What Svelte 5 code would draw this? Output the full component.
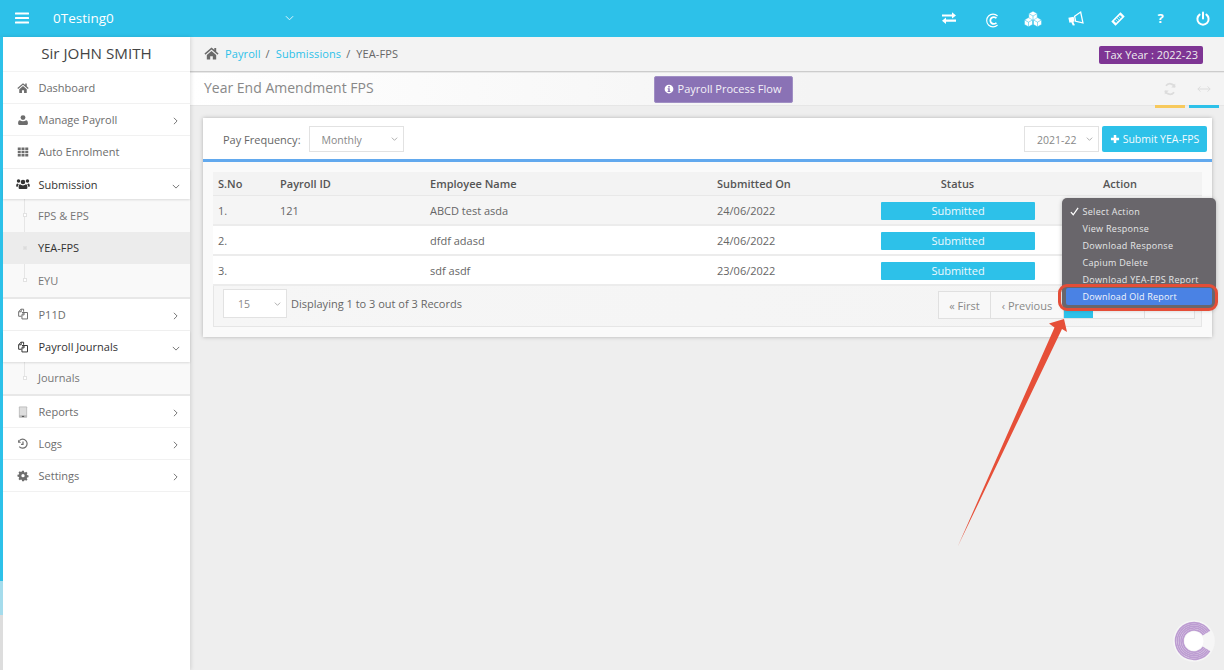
<script>
  const icons = {
    home: 'M8 1.5 0.5 8l1 1.2L8 3.6l6.5 5.6 1-1.2L13 5.8V2h-2v2.1zM3 9.6V14.5h3.6v-3.6h2.8v3.6H13V9.6L8 5.3z',
    user: 'M8 1.5a3.3 3.3 0 1 1 0 6.6 3.3 3.3 0 0 1 0-6.6zM3.8 8.2C5 9.2 6.4 9.6 8 9.6s3-.4 4.2-1.4c1.5.3 2.3 1.6 2.3 3.6v1.2c0 .8-.6 1.5-1.4 1.5H2.9c-.8 0-1.4-.7-1.4-1.5v-1.2c0-2 .8-3.3 2.3-3.6z',
    grid: 'M1 2h4v3.4H1zM6 2h4v3.4H6zM11 2h4v3.4h-4zM1 6.3h4v3.4H1zM6 6.3h4v3.4H6zM11 6.3h4v3.4h-4zM1 10.600h4V14H1zM6 10.600h4V14H6zM11 10.600h4V14h-4z',
    users: 'M8 3a2.6 2.6 0 1 1 0 5.2A2.6 2.6 0 0 1 8 3zM2.9 2.6a2 2 0 1 1 0 4 2 2 0 0 1 0-4zM13.100 2.6a2 2 0 1 1 0 4 2 2 0 0 1 0-4zM4.6 8.4c.9.8 2 1.2 3.4 1.2s2.5-.4 3.4-1.2c1 .2 1.6 1.2 1.6 2.6v1.6c0 .6-.5 1-1 1H4c-.5 0-1-.4-1-1V11c0-1.4.6-2.4 1.6-2.6zM.2 10.200c0-1.4.5-2.6 1.5-2.8.5.5 1 .7 1.6.8-.8.6-1.2 1.6-1.3 2.8H.7c-.3 0-.5-.3-.5-.8zM15.800 10.200c0 .5-.2.8-.5.8h-1.3c-.1-1.2-.5-2.2-1.3-2.8.6-.1 1.1-.3 1.6-.8 1 .2 1.5 1.4 1.5 2.8z',
    cog: 'M6.8 1h2.4l.4 1.9c.4.1.8.3 1.1.5l1.6-1 1.7 1.7-1 1.6c.2.3.4.7.5 1.1l1.9.4v2.4l-1.9.4c-.1.4-.3.8-.5 1.1l1 1.6-1.7 1.7-1.6-1c-.3.2-.7.4-1.1.5L9.2 15H6.8l-.4-1.9c-.4-.1-.8-.3-1.1-.5l-1.6 1L2 11.900l1-1.6c-.2-.3-.4-.7-.5-1.1L.6 8.8V6.4l1.9-.4c.1-.4.3-.8.5-1.1L2 3.3 3.7 1.6l1.6 1c.3-.2.7-.4 1.1-.5zM8 5.4a2.2 2.2 0 1 0 0 4.4 2.2 2.2 0 0 0 0-4.4z',
    info: 'M8 1a7 7 0 1 1 0 14A7 7 0 0 1 8 1zM6.8 3.2v2.2h2.4V3.2zM5.8 6.6v1.6h1v3H5.8v1.6h4.4v-1.6h-1V6.6z',
    plus: 'M6 1.5h4V6h4.5v4H10v4.5H6V10H1.5V6H6z'
  };
  const menu = [
    { label: 'Dashboard', icon: 'home' },
    { label: 'Manage Payroll', icon: 'user', chev: 'right' },
    { label: 'Auto Enrolment', icon: 'grid' },
    { label: 'Submission', icon: 'users', chev: 'down', open: true, subs: [
      { label: 'FPS & EPS' }, { label: 'YEA-FPS', active: true }, { label: 'EYU' } ] },
    { label: 'P11D', icon: 'docs', chev: 'right' },
    { label: 'Payroll Journals', icon: 'docs', chev: 'down', open: true, subs: [ { label: 'Journals' } ] },
    { label: 'Reports', icon: 'tablet', chev: 'right' },
    { label: 'Logs', icon: 'history', chev: 'right' },
    { label: 'Settings', icon: 'cog', chev: 'right' }
  ];
  const rows = [
    { n: '1.', id: '121', name: 'ABCD test asda', date: '24/06/2022' },
    { n: '2.', id: '', name: 'dfdf adasd', date: '24/06/2022' },
    { n: '3.', id: '', name: 'sdf asdf', date: '23/06/2022' }
  ];
  const actions = ['Select Action', 'View Response', 'Download Response', 'Capium Delete', 'Download YEA-FPS Report'];
  const rings = [18.4, 16.6, 14.8, 13, 11.2];
  function hex(x, y, r) {
    const w = r * 0.87, h = r / 2;
    return `M${x} ${y - r}L${x + w} ${y - h}V${y + h}L${x} ${y + r}L${x - w} ${y + h}V${y - h}z`;
  }
  function ys(x, y, r) {
    const w = r * 0.87, h = r / 2;
    return `M${x - w} ${y - h}L${x} ${y}L${x + w} ${y - h}M${x} ${y}V${y + r}`;
  }
  const cubes = [[9, 5, 4.8], [4.5, 11.2, 4.6], [13.5, 11.2, 4.6]];
</script>

{#snippet icon(name)}
  {#if name === 'docs'}
    <svg class="mi" viewBox="0 0 16 16" fill="none" stroke="currentColor" stroke-width="1.3"><path d="M6 11H2.2V5l3-3.4h3.6V5"/><path d="M5.6 1.8V5H2.4"/><path d="M6.6 6h7.4v8.6H6.6V9l2.600-3"/><path d="M9.4 6.2v3H6.8"/></svg>
  {:else if name === 'history'}
    <svg class="mi" viewBox="0 0 16 16" fill="none" stroke="currentColor" stroke-width="1.6"><path d="M3.200 3.400A6 6 0 1 1 3 11.600"/><path d="M8 4.800V8.400H5.400"/><path d="M1.400 2.200v4h4z" fill="currentColor" stroke="none"/></svg>
  {:else if name === 'tablet'}
    <svg class="mi" viewBox="0 0 16 16"><rect x="2.500" y="0.500" width="11" height="15" rx="1" fill="#b9b9b9"/><rect x="3.500" y="1.800" width="9" height="10.500" fill="#dedede"/><rect x="6.500" y="13.200" width="3" height="1.400" fill="#555"/></svg>
  {:else}
    <svg class={`mi ${name}`} viewBox="0 0 16 16" fill="currentColor"><path d={icons[name]}/></svg>
  {/if}
{/snippet}

{#snippet caret(cls)}
  <svg class={cls} viewBox="0 0 10 6" fill="none" stroke="currentColor" stroke-width="1"><path d="M1 1l4 4 4-4"/></svg>
{/snippet}

<div class="page">
  <header class="topbar">
    <div class="brand">
      <svg class="burger" viewBox="0 0 14 12" fill="#fff"><rect width="14" height="2.200" y="0.400" rx=".5"/><rect width="14" height="2.200" y="4.900" rx=".5"/><rect width="14" height="2.200" y="9.400" rx=".5"/></svg>
      <span class="company">0Testing0</span>
      <svg class="brandcaret" viewBox="0 0 10 6" fill="none" stroke="#fff" stroke-width="1.100" opacity=".85"><path d="M1 1l4 4 4-4"/></svg>
    </div>
    <nav class="tools">
      <svg viewBox="0 0 16 16" fill="#fff"><path d="M1 3.400h10V1.200L15 4.400l-4 3.100V5.400H1zM15 8.600H5V6.600l-4 3.100 4 3.200v-2.200h10z"/></svg>
      <svg class="cc" viewBox="0 0 16 16" fill="none" stroke="#fff"><path d="M13.400 3.200A6.800 6.800 0 1 0 13.400 12.800" stroke-width="1.200"/><path d="M12.200 5.600a3.700 3.700 0 1 0 0 4.800" stroke-width="1.900"/></svg>
      <svg class="cubes" viewBox="0 0 18 16">
        {#each cubes as c}
          <path d={hex(c[0], c[1], c[2])} fill="#fff" stroke="#2dc1e9" stroke-width=".4"/>
          <path d={ys(c[0], c[1], c[2])} fill="none" stroke="#2dc1e9" stroke-width=".55"/>
        {/each}
      </svg>
      <svg viewBox="0 0 16 16" fill="#fff"><g transform="rotate(-12 8 8)"><path d="M.8 5.200h5.400v5H4.800l.9 3.600H3.500L2.700 10.200H.8z"/><path d="M7.200 5 14 2.200v11L7.200 10.200z" fill="none" stroke="#fff" stroke-width="1.300"/></g></svg>
      <svg class="tk" viewBox="0 0 16 16"><g transform="rotate(-45 8 8)"><rect x="0.500" y="4.500" width="15" height="7" rx=".5" fill="#fff"/><rect x="3.200" y="6.300" width="9.600" height="3.400" fill="#2dc1e9"/><path d="M5.500 6.300v3.400M8 6.300v3.400M10.500 6.300v3.400" stroke="#fff" stroke-width=".7"/></g></svg>
      <span class="q">?</span>
      <svg viewBox="0 0 16 16" fill="none" stroke="#fff" stroke-width="2" stroke-linecap="round"><path d="M8 1.500v6"/><path d="M4.600 3.600a5.600 5.600 0 1 0 6.800 0"/></svg>
    </nav>
  </header>

  <div class="body">
    <aside class="sidebar">
      <h2 class="who">Sir JOHN SMITH</h2>
      <ul class="menu">
        {#each menu as m}
          <li class="item" class:open={m.open}>
            <span class="mw">{@render icon(m.icon)}</span>
            <span class="ml">{m.label}</span>
            {#if m.chev === 'right'}
              <svg class="chev" viewBox="0 0 6 10" fill="none" stroke="currentColor" stroke-width="1.100"><path d="M1 1l4 4-4 4"/></svg>
            {:else if m.chev === 'down'}
              <svg class="chev down" viewBox="0 0 10 6" fill="none" stroke="currentColor" stroke-width="1.100"><path d="M1 1l4 4 4-4"/></svg>
            {/if}
          </li>
          {#if m.subs}
            <li class="subs">
              {#each m.subs as s}
                <div class="sub" class:active={s.active}><i class="dot"></i>{s.label}</div>
              {/each}
            </li>
          {/if}
        {/each}
      </ul>
    </aside>

    <main class="main">
      <div class="crumbs">
        <div class="trail">
          <svg class="hm" viewBox="0 0 16 16" fill="#6b6b6b"><path d={icons.home}/></svg>
          <a href="#p">Payroll</a><span class="sep">/</span><a href="#s">Submissions</a><span class="sep">/</span><span>YEA-FPS</span>
        </div>
        <span class="tax">Tax Year : 2022-23</span>
      </div>

      <div class="titlebar">
        <h1>Year End Amendment FPS</h1>
        <button class="flow"><svg viewBox="0 0 16 16" fill="#fff"><path d={icons.info}/></svg>Payroll Process Flow</button>
        <div class="tb-tools">
          <div class="tb yellow">
            <svg viewBox="0 0 16 16" fill="none" stroke="#dcdcdc" stroke-width="2"><path d="M13.400 6A5.600 5.600 0 0 0 3.400 4.400M2.600 10a5.600 5.600 0 0 0 10 1.600"/><path d="M14 1.600v4.600H9.400zM2 14.400V9.800h4.600z" fill="#dcdcdc" stroke="none"/></svg>
          </div>
          <div class="tb blue">
            <svg viewBox="0 0 16 10" fill="none" stroke="#dcdcdc" stroke-width="1.100"><path d="M1 5h14M4 2 1 5l3 3M12 2l3 3-3 3"/></svg>
          </div>
        </div>
      </div>

      <section class="card">
        <div class="filter">
          <label class="pf" for="pf">Pay Frequency:</label>
          <div class="sel pfsel" id="pf">Monthly{@render caret('selc')}</div>
          <div class="right">
            <div class="sel yrsel">2021-22{@render caret('selc')}</div>
            <button class="submit"><svg viewBox="0 0 16 16" fill="#fff"><path d={icons.plus}/></svg>Submit YEA-FPS</button>
          </div>
        </div>
        <div class="tablewrap">
          <div class="row head">
            <div>S.No</div><div>Payroll ID</div><div>Employee Name</div><div>Submitted On</div><div class="c">Status</div><div class="c">Action</div>
          </div>
          {#each rows as r, i}
            <div class="row data" class:odd={i === 0}>
              <div>{r.n}</div><div>{r.id}</div><div>{r.name}</div><div>{r.date}</div>
              <div><span class="badge">Submitted</span></div><div></div>
            </div>
          {/each}
          <div class="foot">
            <div class="sel psel">15{@render caret('selc')}</div>
            <span class="disp">Displaying 1 to 3 out of 3 Records</span>
            <div class="pager">
              <span class="pg first">« First</span>
              <span class="pg prev">‹ Previous</span>
              <span class="pg cur"></span>
              <span class="pg nx"></span>
              <span class="pg nx2"></span>
            </div>
          </div>
        </div>
      </section>
    </main>
  </div>

  <div class="dropdown">
    {#each actions as a, i}
      <div class="act">{#if i === 0}<svg class="tick" viewBox="0 0 10 10" fill="none" stroke="#fff" stroke-width="1.400"><path d="M1 5.600 3.600 8.600 9 1"/></svg>{/if}{a}</div>
    {/each}
    <div class="act hl">Download Old Report</div>
  </div>
  <div class="ring"></div>

  <svg class="arrow" viewBox="0 0 1224 670" fill="#e64f38"><path d="M1064 319 1049 323.500 1054.500 327.500 957.500 547 1062 329 1067 332z"/></svg>

  <div class="logo">
    <svg viewBox="0 0 42 42" fill="none">
      <circle cx="21" cy="21" r="20.800" fill="#f6f6f6"/>
      {#each rings as r}
        <circle cx="21" cy="21" {r} stroke="#bd9dd2" stroke-width="1.700" pathLength="360" stroke-dasharray="296 64" transform="rotate(32 21 21)"/>
      {/each}
      <circle cx="21" cy="21" r="9.500" fill="#fff"/>
    </svg>
  </div>
</div>

<style>
  :global(body) { margin: 0; background: #eeeeee; }
  .page {
    position: relative; width: 1224px; height: 670px; overflow: hidden;
    font-family: "Open Sans", "Noto Sans", sans-serif; font-size: 11px; color: #555;
    background: #eeeeee; display: flex; flex-direction: column;
  }
  .topbar {
    height: 37px; background: #2dc1e9; display: flex; align-items: center; justify-content: space-between;
    flex: none; color: #fff;
  }
  .brand { display: flex; align-items: center; padding-left: 15px; }
  .burger { width: 14px; height: 12px; margin-top: -1px; }
  .company { margin-left: 24px; font-size: 13.500px; width: 230px; line-height: 1; }
  .brandcaret { width: 9px; height: 6px; margin-top: -1px; margin-left: 2px; }
  .tools { display: flex; align-items: center; padding-right: 13px; gap: 26.500px; }
  .tools svg { width: 16px; height: 16px; display: block; }
  .tools .cc { margin: 4px -1px 0 1px; width: 15px; height: 15px; }
  .tools .cubes { width: 18px; margin: 0 -1px; }
  .tools .tk { width: 14px; height: 14px; margin: 0 1px; }
  .q { font-size: 13px; font-weight: 700; width: 16px; text-align: center; line-height: 16px; margin-top: -2px; }

  .body { display: flex; flex: 1; min-height: 0; }
  .sidebar {
    width: 190px; flex: none; padding-left: 3px; box-sizing: border-box;
    background: linear-gradient(to bottom, #2dc1e9 544px, #a5dcec 544px, #a5dcec 578px, #dddddd 578px) 0 0 / 3px 100% no-repeat, #fff;
    box-shadow: 1px 0 4px rgba(0,0,0,.12); position: relative; z-index: 1;
  }
  .who { margin: 0; height: 34px; line-height: 32px; text-align: center; font-size: 15.200px; font-weight: 400; color: #444; }
  .menu { list-style: none; margin: 0; padding: 0; border-top: 1px solid #f3f3f3; background: #fff; }
  .item {
    height: 32.200px; box-sizing: border-box; display: flex; align-items: center; border-bottom: 1px solid #f1f1f1; color: #6d6d6d; font-size: 11px;
    position: relative;
  }
  .item.open { color: #333; border-bottom: 0; height: 30.800px; padding-top: 1px; box-shadow: 0 1px 2px rgba(0,0,0,.12); z-index: 1; }
  .mw { width: 14px; margin-left: 13px; display: flex; justify-content: center; }
  .mi { width: 12px; height: 12px; display: block; flex: none; }
  .mi.users { width: 14px; height: 14px; }
  .ml { margin-left: 8.500px; }
  .chev { position: absolute; right: 12px; top: 13px; width: 5px; height: 8px; color: #666; }
  .chev.down { width: 8px; height: 5px; right: 10px; top: 15px; }
  .subs { background: #f9f9f9; border-bottom: 2px solid #e8e8e8; position: relative; }
  .subs::before { content: ""; position: absolute; left: 21px; top: 0; bottom: 15px; width: 1px; background: #e6e6e6; }
  .sub { height: 32.400px; display: flex; align-items: center; padding-left: 35px; color: #777; font-size: 11px; position: relative; }
  .sub.active { background: #ececec; color: #333; }
  .dot { position: absolute; left: 19.500px; top: 14px; width: 4px; height: 4px; background: #fff; border: 1px solid #e2e2e2; box-sizing: border-box; }
  .sub.active .dot { background: #dcdcdc; }

  .main { flex: 1; min-width: 0; display: flex; flex-direction: column; }
  .crumbs {
    height: 34px; flex: none; display: flex; align-items: center; justify-content: space-between;
    padding: 0 21px 0 14px; background: #f3f3f3; box-shadow: 0 1px 1px rgba(0,0,0,.14); position: relative; box-sizing: border-box;
  }
  .trail { display: flex; align-items: center; font-size: 11px; color: #666; letter-spacing: .1px; margin-top: -2px; }
  .hm { width: 15px; height: 15px; margin-right: 6px; }
  .trail a { color: #2dc1e9; text-decoration: none; }
  .sep { margin: 0 6px 0 5px; }
  .tax { background: #7e3594; color: #eee; font-size: 11px; border-radius: 2px; padding: 0 5px; line-height: 18px; height: 18px; margin-top: 2px; }
  .titlebar {
    height: 33px; margin-top: 2px; flex: none; display: flex; align-items: center; padding-left: 14px; padding-right: 5px; box-sizing: border-box;
    background: linear-gradient(90deg, #fff, #f4f4f4 60%); border-bottom: 1px solid #e6e6e6; position: relative;
  }
  .titlebar h1 { margin: -4px 0 0; font-size: 14px; font-weight: 400; color: #888; width: 450px; }
  .flow {
    height: 27px; width: 139px; margin-top: 1px; border: 1px solid #a08fc4; background: #8a72b5; color: #f4f1f8; border-radius: 2px;
    font: 11px "Open Sans", sans-serif; display: flex; align-items: center; justify-content: center; padding: 0 2px 2px 0;
  }
  .flow svg { width: 10px; height: 10px; margin-right: 4px; }
  .tb-tools { margin-left: auto; display: flex; gap: 4.500px; align-self: flex-start; }
  .tb { width: 30px; display: flex; align-items: center; justify-content: center; box-sizing: border-box; height: 35px; border-bottom: 3px solid; }
  .tb.yellow { border-color: #f7c95c; }
  .tb.blue { border-color: #2dc1e9; }
  .tb svg { width: 14px; height: 14px; }

  .card {
    margin: 12px 12px 0 13px; background: #fafafa; box-shadow: 0 0 4px rgba(0,0,0,.25); height: 219px; box-sizing: border-box;
  }
  .filter {
    height: 44px; background: #fff; border-bottom: 3px solid #62a9ee; display: flex; align-items: center; box-sizing: border-box;
    padding: 0 5px 0 20px;
  }
  .pf { font-size: 11px; color: #666; margin: 2px 8px 0 0; }
  .sel {
    border: 1px solid #e2e2e2; background: #fff; color: #888; font-size: 10.500px; display: flex; align-items: center; position: relative; box-sizing: border-box;
  }
  .sel :global(.selc) { position: absolute; right: 5px; top: 50%; margin-top: -2px; width: 7px; height: 4px; color: #888; }
  .pfsel { width: 95px; height: 26px; padding: 2px 0 0 12px; }
  .right { margin-left: auto; display: flex; align-items: center; gap: 3px; }
  .yrsel { width: 75px; height: 26px; padding: 1px 0 0 12px; margin-top: 1px; }
  .submit {
    height: 26px; width: 105px; border: 0; background: #2dc1e9; color: #f3fbfe; border-radius: 2px; padding: 0;
    font: 10.500px "Open Sans", sans-serif; display: flex; align-items: center; justify-content: center;
  }
  .submit svg { width: 10px; height: 10px; margin-right: 3px; }
  .tablewrap { margin: 10px 10px 0; }
  .row { display: grid; grid-template-columns: 62px 150px 287px 163px 165px 160px; align-items: center; }
  .row > div { padding-left: 5px; box-sizing: border-box; }
  .row .c { text-align: center; padding-left: 0; }
  .head { height: 24px; background: #f3f3f3; font-weight: 600; color: #555; border-bottom: 1px solid #e8e8e8; box-sizing: border-box; }
  .data { height: 30px; background: #fff; border-bottom: 2px solid #ececec; box-sizing: border-box; color: #666; }
  .data.odd { background: #f5f5f5; }
  .badge {
    display: block; width: 154px; height: 18px; line-height: 18px; margin: 2px 0 0 1px; text-align: center; background: #2dc1e9; color: #eef9fd; border-radius: 1px; font-size: 11px;
  }
  .foot {
    height: 41px; display: flex; align-items: center; padding: 0 6px 5px 10px; border: 1px solid #e6e6e6; border-top: 0;
    background: linear-gradient(90deg, #f6f6f6, #f4f4f4); box-sizing: border-box; position: relative;
  }
  .psel { width: 64px; height: 29px; padding-left: 14px; margin-left: -1px; }
  .disp { margin-left: 4px; color: #666; }
  .pager { margin-left: auto; display: flex; height: 28px; margin-top: 3px; border: 1px solid #e0e0e0; box-sizing: border-box; background: #f8f8f8; }
  .pg { display: flex; align-items: center; justify-content: center; color: #888; border-right: 1px solid #e0e0e0; font-size: 11px; box-sizing: border-box; }
  .first { width: 52px; }
  .prev { width: 73px; }
  .cur { width: 29px; background: #2dc1e9; border-right: 0; }
  .nx { width: 52px; }
  .nx2 { width: 49px; border-right: 0; }

  .dropdown {
    position: absolute; left: 1062px; top: 198px; width: 154px; height: 111px; padding-top: 5px; box-sizing: border-box; z-index: 4;
    background: #69666b; border-radius: 5px; box-shadow: 0 1px 4px rgba(0,0,0,.25); color: #e6e6e8; font-size: 9px; letter-spacing: .3px;
  }
  .act { height: 17px; line-height: 17px; padding-left: 20.500px; position: relative; white-space: nowrap; }
  .tick { position: absolute; left: 8px; top: 4px; width: 9px; height: 9px; }
  .act.hl { background: #4a82e4; color: #f2f5fc; margin: 0 4px 0 4px; padding-left: 16.500px; border-radius: 2px; height: 17px; line-height: 18px; letter-spacing: .2px; }
  .ring {
    position: absolute; left: 1058px; top: 284px; width: 160px; height: 27px; box-sizing: border-box; z-index: 5;
    border: 3.500px solid #e44d37; border-radius: 9px;
  }
  .arrow { position: absolute; left: 0; top: 0; width: 1224px; height: 670px; z-index: 6; pointer-events: none; }
  .logo { position: absolute; left: 1173px; top: 620px; width: 42px; height: 42px; z-index: 3; }
  .logo svg { width: 100%; height: 100%; display: block; }
</style>
